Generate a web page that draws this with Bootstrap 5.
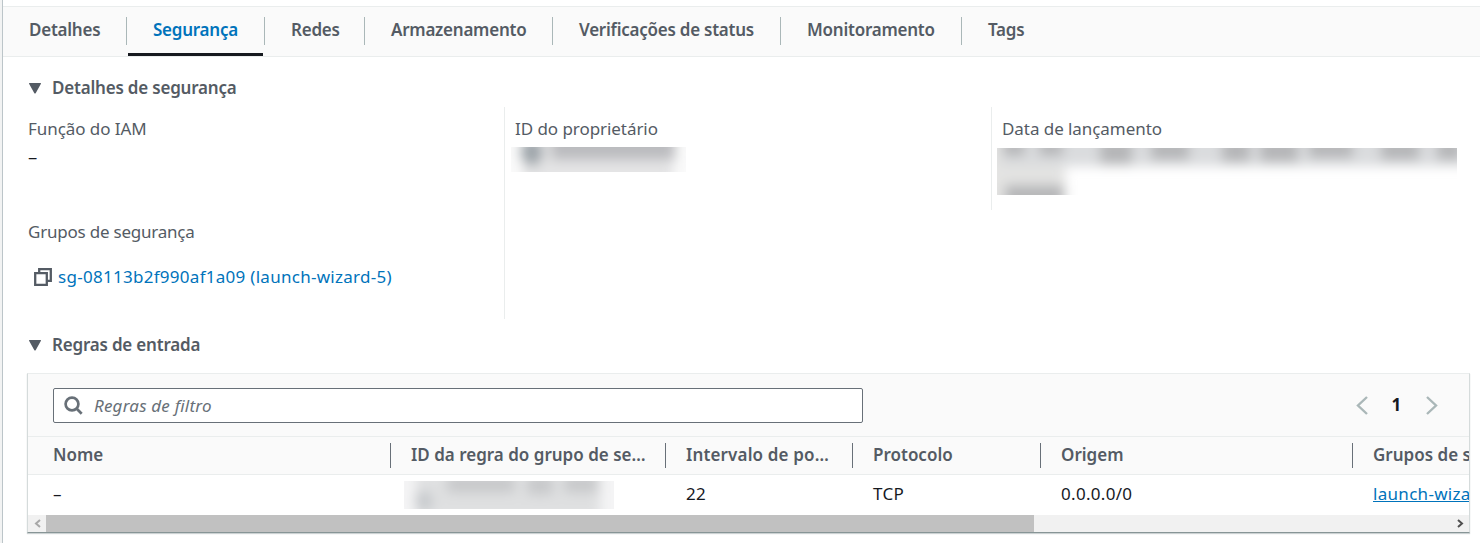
<!DOCTYPE html>
<html lang="pt-BR">
<head>
<meta charset="utf-8">
<meta name="viewport" content="width=device-width, initial-scale=1">
<title>Segurança da instância</title>
<link rel="stylesheet" href="https://cdn.jsdelivr.net/npm/bootstrap@5.3.0/dist/css/bootstrap.min.css">
<style>
  body { font-family: "Noto Sans", "Open Sans", sans-serif; font-size: 17px; line-height: 24px; color: #16191f; letter-spacing: -.24px; background: #fff; }
  a { color: #0073bb; }
  .page { height: 543px; border-left: 2px solid #f2f3f3; }
  .panel { height: 543px; border-left: 1px solid #bcc5c9; padding-top: 6px; }
  .tabs { display: grid; grid-template-columns: 124px 138px 100px 188px 228px 181px 1fr; height: 51px; background: #fafafa; border: 1px solid #eaeded; border-width: 1px 0; }
  .tabs .nav-link { position: relative; padding: 11px 0 0 26px; color: #545b64; font-weight: 600; line-height: 24px; height: 49px; white-space: nowrap; }
  .tabs .nav-link:not(:last-child)::after { content: ""; position: absolute; right: 0; top: 10px; height: 28px; width: 1px; background: #aab7b8; }
  .tabs .nav-link.active { color: #0073bb; }
  .tabs .nav-link.active::before { content: ""; position: absolute; left: 1px; right: 2px; bottom: 0; height: 3px; background: #16191f; }
  .section-title { font-size: 17px; line-height: 24px; height: 24px; font-weight: 600; color: #545b64; margin: 0; padding-left: 26px; gap: 11px; letter-spacing: -.2px; }
  .t-label { color: #545b64; line-height: 24px; letter-spacing: -.06px; }
  .t-label.snug { letter-spacing: -.22px; }
  .t-empty { margin-top: 4px; font-size: 18.5px; }
  .sg-link { letter-spacing: .28px; }
  .details { display: grid; grid-template-columns: 476px 487px 1fr; grid-template-rows: 103px 109px; margin: 7px 0 0 25px; }
  .details > div { padding-top: 10px; }
  .details > .split { border-left: 1px solid #eaeded; padding-left: 10px; }
  .redact { overflow: hidden; }
  .rules { width: 1443px; height: 160px; margin: 16px 0 0 24px; border: 1px solid #d5dbdb; border-top-color: #eaeded; border-bottom-color: #879596; box-shadow: 0 1px 1px rgba(0,28,36,.2); overflow: hidden; }
  .toolbar { height: 62px; background: #fafafa; padding: 0 31px 0 25px; }
  .search { width: 810px; height: 35px; border: 1px solid #687078; border-radius: 2px; background: #fff; padding-left: 10px; color: #687078; font-style: italic; letter-spacing: .2px; }
  .rules table { table-layout: fixed; width: 1625px; margin: 0; border-collapse: separate; border-spacing: 0; }
  .rules th { position: relative; height: 39px; padding: 0 17px 2px 20px; background: #fafafa; border: 1px solid #eaeded; border-width: 1px 0; font-weight: 600; color: #545b64; white-space: nowrap; overflow: hidden; text-overflow: ellipsis; letter-spacing: 0; }
  .rules th:nth-child(3) { padding-right: 22px; letter-spacing: .15px; }
  .rules th:not(:last-child)::after { content: ""; position: absolute; right: 0; top: 6px; height: 25px; width: 1px; background: #687078; }
  .rules td { height: 40px; padding: 0 0 2px 20px; white-space: nowrap; letter-spacing: .3px; }
  .rules th:first-child, .rules td:first-child { padding-left: 25px; }
  .hbar { height: 17px; background: #f1f1f1; padding: 0 2px 0 0; }
  .hbar .thumb { width: 988px; height: 17px; background: #c1c1c1; }
</style>
</head>
<body>
<div class="page overflow-hidden">
<main class="panel">
  <nav class="nav tabs">
    <a class="nav-link" href="#">Detalhes</a>
    <a class="nav-link active" href="#">Segurança</a>
    <a class="nav-link" href="#">Redes</a>
    <a class="nav-link" href="#">Armazenamento</a>
    <a class="nav-link" href="#">Verificações de status</a>
    <a class="nav-link" href="#">Monitoramento</a>
    <a class="nav-link" href="#">Tags</a>
  </nav>

  <h2 class="section-title d-flex align-items-center" style="margin-top:19px">
    <svg width="12" height="11" viewBox="0 0 12 11"><path d="M.6 0h10.8q1 0 .4 1L6.8 10q-.8 1-1.6 0L.2 1Q-.4 0 .6 0Z" fill="#545b64"/></svg>
    <span>Detalhes de segurança</span>
  </h2>

  <section class="details">
    <div><div class="t-label">Função do IAM</div><div class="t-empty">–</div></div>
    <div class="split" style="grid-row:span 2">
      <div class="t-label">ID do proprietário</div>
      <svg class="redact d-block" style="margin:6px 0 0 -4px" width="175" height="25">
        <defs><filter id="soft" x="-50%" y="-50%" width="200%" height="200%"><feGaussianBlur stdDeviation="6"/></filter></defs>
        <rect width="175" height="25" fill="#fafafa"/>
        <g filter="url(#soft)">
          <rect x="12" y="-10" width="150" height="46" fill="#e4e4e5"/>
          <ellipse cx="21" cy="5" rx="11" ry="14" fill="#9ea5aa"/>
          <rect x="40" y="-14" width="124" height="27" fill="#bbbcbf"/>
        </g>
      </svg>
    </div>
    <div class="split">
      <div class="t-label">Data de lançamento</div>
      <svg class="redact d-block" style="margin:7px 0 0 -5px" width="460" height="47">
        <g filter="url(#soft)">
          <rect x="-10" y="-10" width="78" height="70" fill="#e3e3e2"/>
          <rect x="4" y="-12" width="472" height="30" fill="#dadcde"/>
          <g fill="#b5b6b8">
            <rect x="6" y="-8" width="22" height="16"/><rect x="42" y="-8" width="24" height="16"/>
            <rect x="103" y="-8" width="32" height="24"/><rect x="154" y="-8" width="38" height="20"/>
            <rect x="225" y="-8" width="28" height="22"/><rect x="263" y="-8" width="38" height="22"/>
            <rect x="312" y="-8" width="44" height="18"/><rect x="384" y="-8" width="38" height="20"/>
            <rect x="440" y="-8" width="24" height="20"/>
            <rect x="8" y="37" width="59" height="20"/>
          </g>
        </g>
      </svg>
    </div>
    <div>
      <div class="t-label snug">Grupos de segurança</div>
      <div class="d-flex align-items-center" style="margin-top:21px;padding-left:6px;gap:6px">
        <svg width="18" height="18" viewBox="0 0 18 18" fill="none" stroke="#545b64" stroke-width="2.3"><path d="M1.2 5.2h11.6v11.6H1.2zM5.2 5.2v-4h11.6v11.6h-4"/></svg>
        <a class="text-decoration-none sg-link" href="#">sg-08113b2f990af1a09 (launch-wizard-5)</a>
      </div>
    </div>
  </section>

  <h2 class="section-title d-flex align-items-center" style="margin-top:14px">
    <svg width="12" height="11" viewBox="0 0 12 11"><path d="M.6 0h10.8q1 0 .4 1L6.8 10q-.8 1-1.6 0L.2 1Q-.4 0 .6 0Z" fill="#545b64"/></svg>
    <span>Regras de entrada</span>
  </h2>

  <section class="rules">
    <div class="toolbar d-flex align-items-center justify-content-between">
      <div class="search d-flex align-items-center">
        <svg width="19" height="19" viewBox="0 0 19 19" fill="none" stroke="#687078" stroke-width="2.7"><circle cx="8" cy="8" r="6.4"/><path d="m12.5 12.5 5.2 5.2"/></svg>
        <span style="margin-left:11px;padding-top:1px">Regras de filtro</span>
      </div>
      <div class="d-flex align-items-center">
        <svg width="12" height="19" viewBox="0 0 12 19" fill="none" stroke="#aab7b8" stroke-width="2.4"><path d="M11 1 2 9.500l9 8.500"/></svg>
        <span class="fw-bold" style="margin:0 25px 0 24px">1</span>
        <svg width="12" height="19" viewBox="0 0 12 19" fill="none" stroke="#aab7b8" stroke-width="2.4"><path d="m1 1 9 8.500L1 18"/></svg>
      </div>
    </div>
    <table>
      <colgroup><col style="width:363px"><col style="width:275px"><col style="width:187px"><col style="width:188px"><col style="width:312px"><col style="width:300px"></colgroup>
      <thead><tr><th>Nome</th><th>ID da regra do grupo de segurança</th><th>Intervalo de portas</th><th>Protocolo</th><th>Origem</th><th>Grupos de segurança</th></tr></thead>
      <tbody><tr>
        <td>–</td>
        <td>
          <svg class="redact d-block" style="margin:2px 0 0 -7px" width="210" height="28">
            <rect width="210" height="28" fill="#f4f4f5"/>
            <g filter="url(#soft)">
              <rect x="12" y="-8" width="184" height="46" fill="#dfe0e1"/>
              <ellipse cx="20" cy="20" rx="9" ry="10" fill="#c6c9cc"/>
              <g fill="#c8c9cb"><rect x="43" y="-8" width="68" height="20"/><rect x="123" y="-8" width="26" height="22"/><rect x="160" y="-8" width="34" height="20"/></g>
            </g>
          </svg>
        </td>
        <td>22</td><td>TCP</td><td>0.0.0.0/0</td><td><a href="#">launch-wizard-5</a></td>
      </tr></tbody>
    </table>
    <div class="hbar d-flex align-items-center">
      <svg width="18" height="17" fill="none" stroke="#a8a8a8" stroke-width="2"><path d="m12 5-4 3.500 4 3.500"/></svg>
      <div class="thumb"></div>
      <svg class="ms-auto" width="12" height="17" fill="none" stroke="#505050" stroke-width="2"><path d="m3 5 4 3.500L3 12"/></svg>
    </div>
  </section>
</main>
</div>
<script src="https://cdn.jsdelivr.net/npm/bootstrap@5.3.0/dist/js/bootstrap.bundle.min.js"></script>
</body>
</html>
